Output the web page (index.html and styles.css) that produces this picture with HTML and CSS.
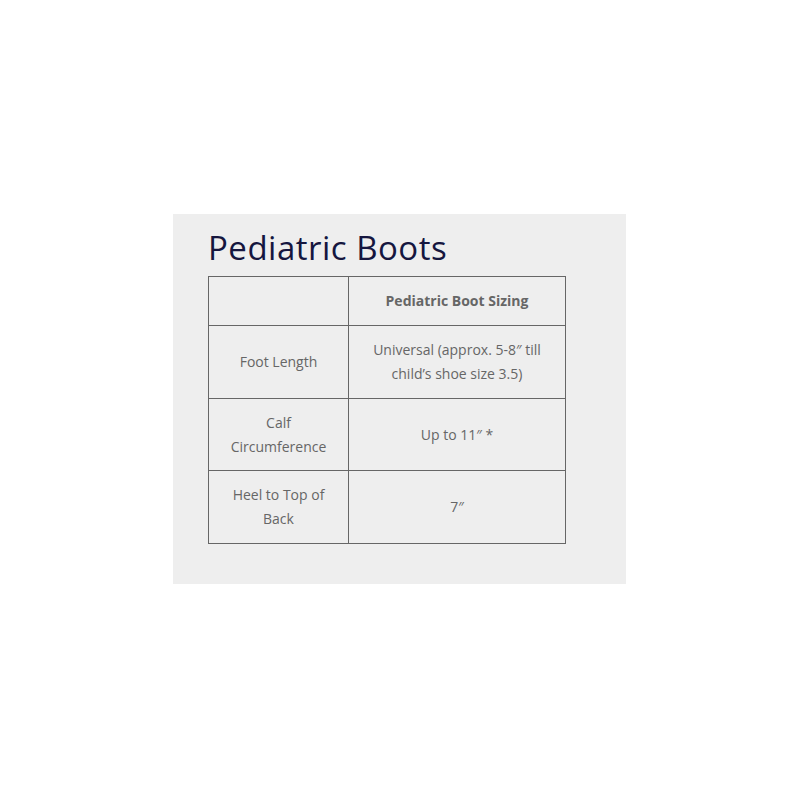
FILE: index.html
```html
<!DOCTYPE html>
<html>
<head>
<meta charset="utf-8">
<link rel="stylesheet" href="styles.css">
</head>
<body>
<div class="page">
  <section class="panel">
    <h2 class="title">Pediatric Boots</h2>
    <table class="sizing">
      <tr>
        <th class="c1"></th>
        <th class="c2">Pediatric Boot Sizing</th>
      </tr>
      <tr>
        <td>Foot Length</td>
        <td>Universal (approx. 5-8″ till<br>child’s shoe size 3.5)</td>
      </tr>
      <tr class="mid">
        <td>Calf<br>Circumference</td>
        <td>Up to 11″ *</td>
      </tr>
      <tr>
        <td>Heel to Top of<br>Back</td>
        <td>7″</td>
      </tr>
    </table>
  </section>
</div>
</body>
</html>
```

FILE: styles.css
```css
html, body {
  margin: 0;
  padding: 0;
  background: #ffffff;
}
.page {
  width: 800px;
  height: 800px;
  padding-top: 214px;
  padding-left: 173px;
  box-sizing: border-box;
}
.panel {
  width: 453px;
  height: 370px;
  box-sizing: border-box;
  background: #eeeeee;
  padding: 14px 0 0 35px;
}
.title {
  margin: 0 0 8px 0;
  font-family: "Open Sans", sans-serif;
  font-weight: 400;
  font-size: 33px;
  line-height: 40px;
  letter-spacing: 0.5px;
  color: #15163f;
}
.sizing {
  border-collapse: collapse;
  width: 358px;
  font-family: "Open Sans", sans-serif;
  font-size: 14px;
  line-height: 24px;
  color: #666666;
  text-align: center;
}
.sizing th, .sizing td {
  border: 1px solid #666666;
  padding: 12px 4px;
  vertical-align: middle;
}
.sizing .mid td {
  padding: 12px 4px 11px;
}
.sizing th {
  font-weight: 700;
}
.c1 { width: 131px; }
.c2 { width: 208px; }
```
